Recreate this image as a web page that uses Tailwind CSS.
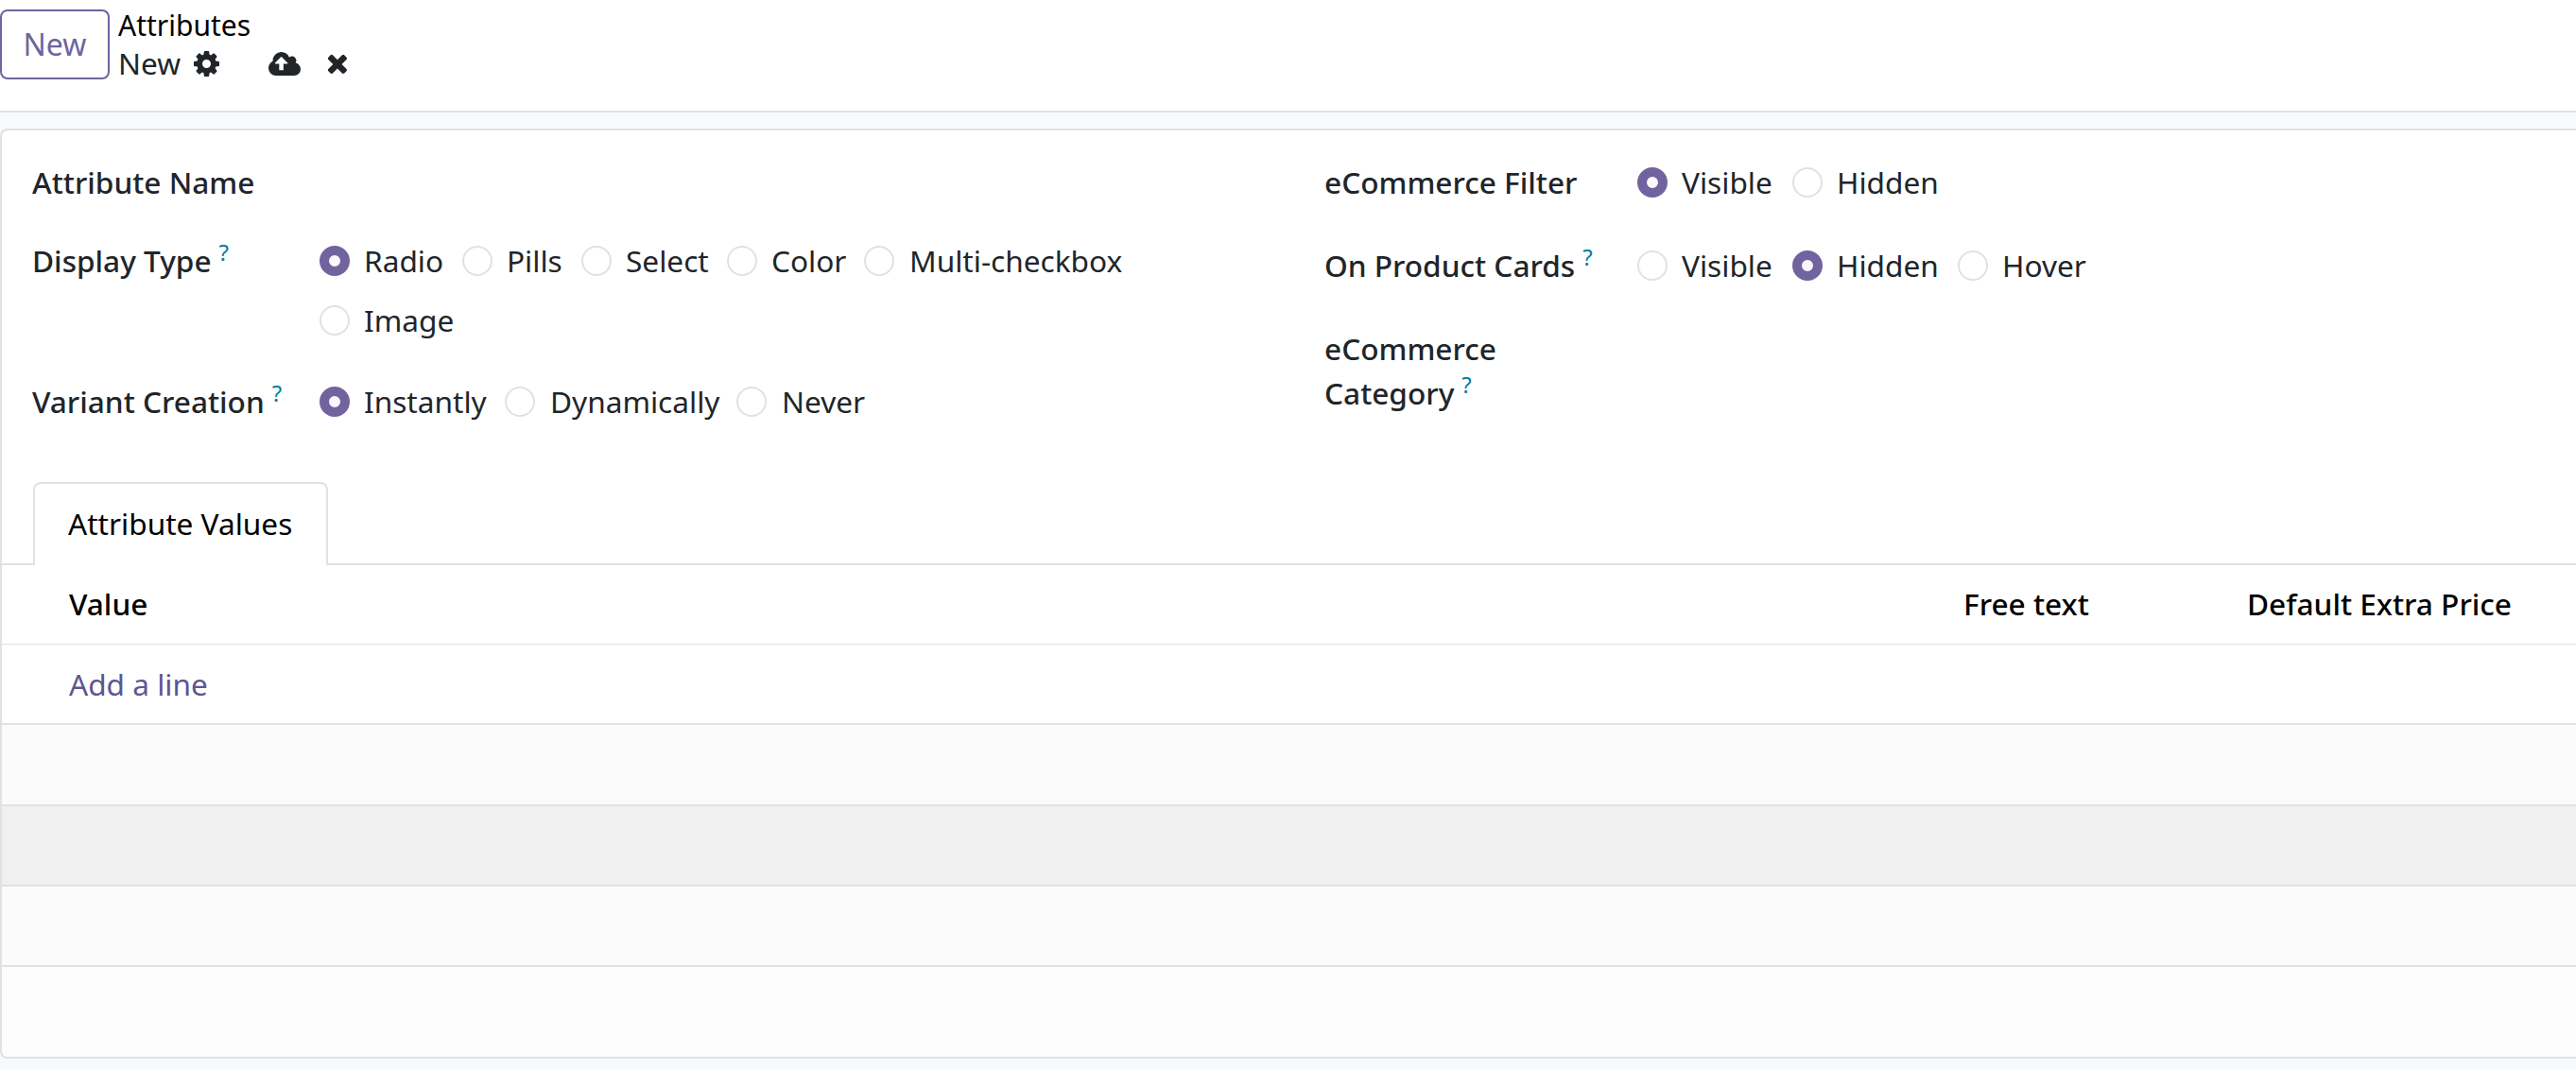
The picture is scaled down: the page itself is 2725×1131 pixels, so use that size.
<!DOCTYPE html>
<html lang="en">
<head>
<meta charset="UTF-8">
<title>Attributes</title>
<script src="https://cdn.jsdelivr.net/npm/@tailwindcss/browser@4"></script>
</head>
<body class="bg-[#f8f9fa] font-['Noto_Sans',sans-serif] text-[31.6px] leading-[46px] text-[#212529] h-[1131px] overflow-hidden">
  <!-- control panel -->
  <div class="h-[119px] bg-white border-b-2 border-[#dee2e6] flex items-start">
    <button class="mt-[10px] w-[116px] h-[74px] border-2 border-[#71639e] rounded-lg text-[#71639e] text-[32px] flex items-center justify-center">New</button>
    <div class="ml-[9px] mt-[4px]">
      <div class="text-black text-[30px] leading-[46px] h-[41px]">Attributes</div>
      <div class="flex items-center h-[44px]">
        <span>New</span>
        <svg class="ml-[14px] w-[27px] h-[27px] fill-[#212529]" viewBox="0 -128 1536 1536"><path d="M1024 640q0-106-75-181t-181-75-181 75-75 181 75 181 181 75 181-75 75-181zm512-109v222q0 12-8 23t-20 13l-185 28q-19 54-39 91 35 50 107 138 10 12 10 25t-9 23q-27 37-99 108t-94 71q-12 0-26-9l-138-108q-44 23-91 38-16 136-29 186-7 28-36 28h-222q-14 0-24.5-8.5t-11.5-21.5l-28-184q-49-16-90-37l-141 107q-10 9-25 9-14 0-25-11-126-114-165-168-7-10-7-23 0-12 8-23 15-21 51-66.5t54-70.5q-27-50-41-99l-183-27q-13-2-21-12.5t-8-23.5v-222q0-12 8-23t19-13l186-28q14-46 39-92-40-57-107-138-10-12-10-24 0-10 9-23 26-36 98.5-107.5t94.5-71.5q13 0 26 10l138 107q44-23 91-38 16-136 29-186 7-28 36-28h222q14 0 24.5 8.5t11.5 21.5l28 184q49 16 90 37l142-107q9-9 24-9 13 0 25 10 129 119 165 170 7 8 7 22 0 12-8 23-15 21-51 66.5t-54 70.5q26 50 41 98l183 28q13 2 21 12.5t8 23.5z"/></svg>
        <svg class="ml-[52px] w-[34px] h-[25px] fill-[#212529]" viewBox="-128 160 1920 1408"><path d="M1024 832q0-14-9-23l-352-352q-9-9-23-9t-23 9l-351 351q-10 12-10 24 0 14 9 23t23 9h224v352q0 13 9.5 22.5t22.5 9.5h192q13 0 22.5-9.5t9.5-22.5v-352h224q13 0 22.5-9.5t9.5-22.5zm768 352q0 159-112.5 271.5t-271.5 112.5h-1088q-185 0-316.5-131.5t-131.5-316.5q0-130 70-240t188-165q-2-30-2-43 0-212 150-362t362-150q156 0 285.5 87t188.5 231q71-62 166-62 106 0 181 75t75 181q0 76-41 138 130 31 213.5 135.5t83.5 238.5z"/></svg>
        <svg class="ml-[27px] w-[22px] h-[22px] fill-[#212529]" viewBox="0 256 1298 1298"><path d="M1298 1322q0 40-28 68l-136 136q-28 28-68 28t-68-28l-294-294-294 294q-28 28-68 28t-68-28l-136-136q-28-28-28-68t28-68l294-294-294-294q-28-28-28-68t28-68l136-136q28-28 68-28t68 28l294 294 294-294q28-28 68-28t68 28l136 136q28 28 28 68t-28 68l-294 294 294 294q28 28 28 68z"/></svg>
      </div>
    </div>
  </div>

  <!-- form sheet -->
  <div class="mt-[17px] h-[984px] bg-white border-2 border-r-0 border-[#dee2e6] rounded-l-lg flex flex-col">
    <div class="h-[458px] flex">
      <!-- left group -->
      <div class="w-[1366px] pl-[32px] pt-[32px]">
        <div class="font-medium h-[46px] flex items-center">Attribute Name</div>
        <div class="flex mt-[37px]">
          <div class="w-[304px] font-medium h-[46px]">Display Type<sup class="ml-[8px] text-[24px] text-[#017e9e] font-normal">?</sup></div>
          <div class="flex flex-col gap-[17px]">
            <div class="flex items-center h-[46px]">
              <span class="w-[32px] h-[32px] rounded-full border-[10px] border-[#71639e] bg-[#f8f9fa]"></span><span class="ml-[15px] w-[104px]">Radio</span>
              <span class="w-[32px] h-[32px] rounded-full border-2 border-[#dee2e6]"></span><span class="ml-[15px] w-[79px]">Pills</span>
              <span class="w-[32px] h-[32px] rounded-full border-2 border-[#dee2e6]"></span><span class="ml-[15px] w-[107px]">Select</span>
              <span class="w-[32px] h-[32px] rounded-full border-2 border-[#dee2e6]"></span><span class="ml-[15px] w-[98px]">Color</span>
              <span class="w-[32px] h-[32px] rounded-full border-2 border-[#dee2e6]"></span><span class="ml-[16px]">Multi-checkbox</span>
            </div>
            <div class="flex items-center h-[46px]">
              <span class="w-[32px] h-[32px] rounded-full border-2 border-[#dee2e6]"></span><span class="ml-[15px]">Image</span>
            </div>
          </div>
        </div>
        <div class="flex mt-[40px]">
          <div class="w-[304px] font-medium h-[46px]">Variant Creation<sup class="ml-[8px] text-[24px] text-[#017e9e] font-normal">?</sup></div>
          <div class="flex items-center h-[46px]">
            <span class="w-[32px] h-[32px] rounded-full border-[10px] border-[#71639e] bg-[#f8f9fa]"></span><span class="ml-[15px] w-[149px]">Instantly</span>
            <span class="w-[32px] h-[32px] rounded-full border-2 border-[#dee2e6]"></span><span class="ml-[16px] w-[197px]">Dynamically</span>
            <span class="w-[32px] h-[32px] rounded-full border-2 border-[#dee2e6]"></span><span class="ml-[16px]">Never</span>
          </div>
        </div>
      </div>
      <!-- right group -->
      <div class="pl-[33px] pt-[32px]">
        <div class="flex">
          <div class="w-[331px] font-medium h-[46px]">eCommerce Filter</div>
          <div class="flex items-center h-[46px]">
            <span class="w-[32px] h-[32px] rounded-full border-[10px] border-[#71639e] bg-[#f8f9fa]"></span><span class="ml-[15px] w-[117px]">Visible</span>
            <span class="w-[32px] h-[32px] rounded-full border-2 border-[#dee2e6]"></span><span class="ml-[15px]">Hidden</span>
          </div>
        </div>
        <div class="flex mt-[42px]">
          <div class="w-[331px] font-medium h-[46px]">On Product Cards<sup class="ml-[8px] text-[24px] text-[#017e9e] font-normal">?</sup></div>
          <div class="flex items-center h-[46px]">
            <span class="w-[32px] h-[32px] rounded-full border-2 border-[#dee2e6]"></span><span class="ml-[15px] w-[117px]">Visible</span>
            <span class="w-[32px] h-[32px] rounded-full border-[10px] border-[#71639e] bg-[#f8f9fa]"></span><span class="ml-[15px] w-[128px]">Hidden</span>
            <span class="w-[32px] h-[32px] rounded-full border-2 border-[#dee2e6]"></span><span class="ml-[15px]">Hover</span>
          </div>
        </div>
        <div class="mt-[41px] w-[220px] font-medium leading-[47px]">eCommerce Category<sup class="ml-[8px] text-[24px] text-[#017e9e] font-normal">?</sup></div>
      </div>
    </div>

    <!-- tab -->
    <div class="pl-[33px] border-b-2 border-[#dee2e6] h-[2px] flex items-end">
      <div class="w-[312px] h-[88px] mb-[-2px] shrink-0 bg-white border-2 border-b-0 border-[#dee2e6] rounded-t-lg text-black pl-[35px] pt-[19px]">Attribute Values</div>
    </div>

    <!-- list header -->
    <div class="h-[84px] pb-[2px] border-b border-[#dee2e6] flex items-center font-medium text-black pl-[71px]">
      <span class="w-[2004px]">Value</span>
      <span class="w-[300px]">Free text</span>
      <span>Default Extra Price</span>
    </div>
    <div class="h-[85px] border-b-2 border-[#dee2e6] flex items-center pl-[71px] text-[#5f5592]">Add a line</div>
    <div class="h-[86px] border-b-2 border-[#dee2e6] bg-[#fbfbfb]"></div>
    <div class="h-[85px] border-b-2 border-[#dee2e6] bg-[#f0f0f0]"></div>
    <div class="h-[85px] border-b-2 border-[#dee2e6] bg-[#fbfbfb]"></div>
    <div class="flex-1 bg-[#fdfdfd] rounded-bl-lg"></div>
  </div>
</body>
</html>
